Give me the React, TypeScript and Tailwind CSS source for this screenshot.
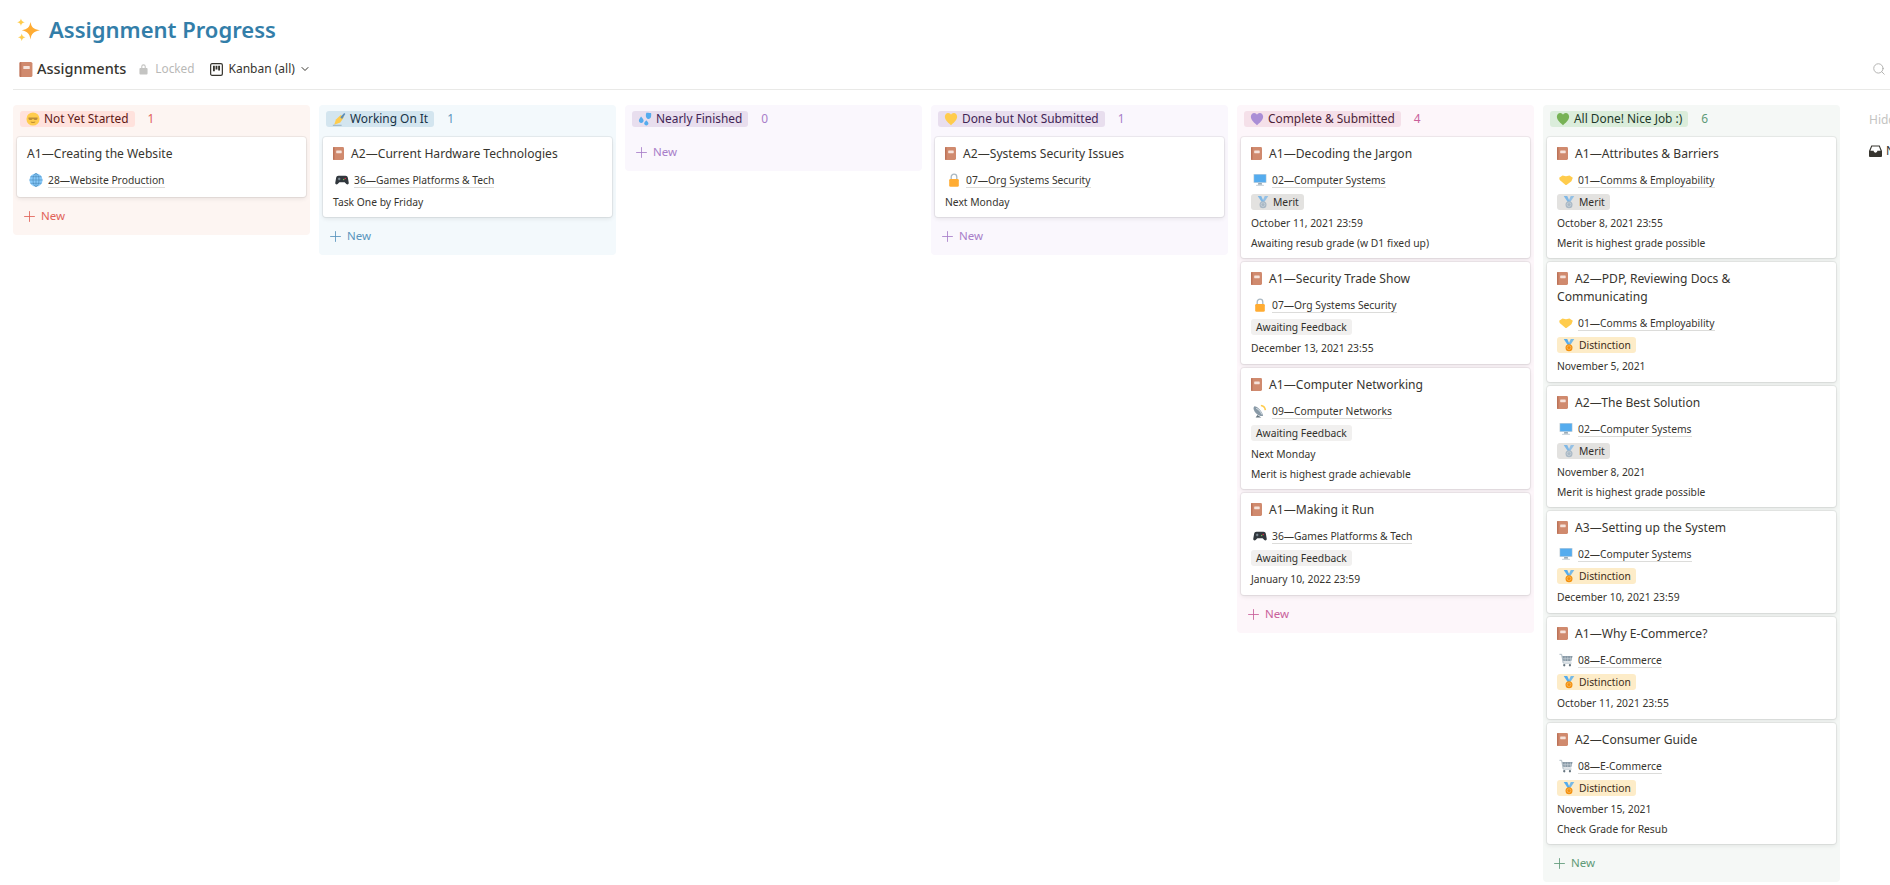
import { ChevronDown, Plus, Search } from 'lucide-react';

type EmojiName =
  | 'sparkles' | 'book' | 'face' | 'writing' | 'drops' | 'yellowHeart' | 'purpleHeart' | 'greenHeart'
  | 'globe' | 'gamepad' | 'lock' | 'computer' | 'handshake' | 'satellite' | 'cart' | 'silver' | 'gold';

function Heart({ color }: { color: string }) {
  return <path d="M8 15C3 11 1 8.200 1 5.200 1 2.800 2.800 1 4.800 1 6.200 1 7.400 1.800 8 3c.6-1.200 1.800-2 3.200-2C13.200 1 15 2.800 15 5.200 15 8.200 13 11 8 15z" fill={color} />;
}

function Medal({ ribbon, disc }: { ribbon: string; disc: string }) {
  return (
    <>
      <path d="M2 1h4l3 7H6.500z" fill={ribbon} />
      <path d="M14 1h-4L7 8h2.500z" fill={ribbon} opacity={0.8} />
      <circle cx="8" cy="11" r="4" fill={disc} />
      <circle cx="8" cy="11" r="2.200" fill={disc} stroke="#fff" strokeOpacity={0.45} strokeWidth={0.7} />
    </>
  );
}

function Emoji({ name, className }: { name: EmojiName; className: string }) {
  // the book and the sparkles are cropped to their own bounds so they can be sized exactly
  const box = name === 'book' ? '2 1 12 14' : name === 'sparkles' ? '1 0.5 14.500 14.500' : '0 0 16 16';
  return (
    <svg viewBox={box} className={`shrink-0 ${className}`}>
      {name === 'sparkles' && (
        <g fill="#FFAC33">
          <path d="M9.500 3c.7 3.400 1.700 4.400 6 5.300-4.300 1-5.300 2-6 5.700-.7-3.700-1.700-4.700-5.500-5.700 3.800-.9 4.800-1.900 5.500-5.300z" />
          <path d="M3.500 .8c.3 1.500.8 2 2.400 2.400-1.600.3-2.100.8-2.400 2.400-.3-1.600-.8-2.100-2.400-2.400 1.600-.4 2.100-.9 2.400-2.400z" fill="#FFCC4D" />
          <path d="M4 10.300c.3 1.600.8 2.100 2.400 2.400-1.600.4-2.100.9-2.400 2.400-.3-1.500-.8-2-2.400-2.400 1.600-.3 2.100-.8 2.400-2.400z" fill="#FFCC4D" />
        </g>
      )}
      {name === 'book' && (
        <>
          <rect x="2" y="1" width="12" height="14" rx="1.500" fill="#D08A6E" />
          <rect x="2" y="1" width="1.600" height="14" rx="0.800" fill="#BC7358" />
          <rect x="5.500" y="4.800" width="6" height="2.800" rx="0.400" fill="#F6E3DB" />
        </>
      )}
      {name === 'face' && (
        <>
          <circle cx="8" cy="8" r="7.500" fill="#FFCC4D" />
          <path d="M2.800 6.200h10.400v1.200c0 1.200-1.300 1.800-2.400 1.800-1.100 0-2-.7-2.800-1.500-.8.800-1.700 1.500-2.800 1.500-1.100 0-2.400-.6-2.400-1.800z" fill="#B98B3A" />
          <path d="M5.500 11.400c1.500.7 3.500.7 5 0" stroke="#A97B2C" strokeWidth="1" fill="none" />
        </>
      )}
      {name === 'writing' && (
        <>
          <path d="M2.500 14.500l2-6 5.500-5 3.500 2.500-4 6z" fill="#FFCC4D" />
          <path d="M9.500 6l4.500-5 1.200 1.200L11.500 8z" fill="#5B8DB8" />
          <path d="M1 15.200h10" stroke="#8FA9BD" strokeWidth="1" />
        </>
      )}
      {name === 'drops' && (
        <g fill="#55ACEE">
          <path d="M9.500 .8c2.800 0 5.500 .5 5.500 .5s.4 3-.4 5.100c-.7 1.700-2.800 2.100-4.200 1-1.500-1.100-1.900-3.400-.9-6.600z" />
          <path d="M3.500 5c1.600 1.900 2.900 3.400 2.900 4.800 0 1.500-1.200 2.700-2.700 2.700S1 11.300 1 9.800c0-1.500 1.100-3 2.500-4.800z" />
          <path d="M9.500 9.500c1.400 1.600 2.400 2.800 2.400 3.700 0 1.200-1.100 2.100-2.400 2.100s-2.400-.9-2.400-2.100c0-.9 1-2.200 2.400-3.700z" />
        </g>
      )}
      {name === 'yellowHeart' && <Heart color="#FFCC4D" />}
      {name === 'purpleHeart' && <Heart color="#AA8ED6" />}
      {name === 'greenHeart' && <Heart color="#77B255" />}
      {name === 'globe' && (
        <>
          <circle cx="8" cy="8" r="7.500" fill="#88C9F9" />
          <g stroke="#4F8FC0" strokeWidth="0.8" fill="none">
            <ellipse cx="8" cy="8" rx="3.400" ry="7.500" />
            <path d="M8 .5v15M.5 8h15M1.800 4.200h12.400M1.800 11.800h12.400" />
          </g>
        </>
      )}
      {name === 'gamepad' && (
        <>
          <path d="M4 3h8c1.600 0 2.400 1 2.700 2.500l1 5.500c.2 1.600-1.500 2.700-2.700 1.500L11 10.500H5l-2 2C1.800 13.700.100 12.600.300 11l1-5.500C1.600 4 2.400 3 4 3z" fill="#31373D" />
          <circle cx="11.700" cy="6.200" r="0.900" fill="#DD2E44" />
          <circle cx="9.900" cy="7.400" r="0.900" fill="#77B255" />
          <path d="M3.300 6.800h2.900M4.750 5.300v3" stroke="#99AAB5" strokeWidth="0.9" />
        </>
      )}
      {name === 'lock' && (
        <>
          <path d="M4.800 8V4.500a3.200 3.200 0 0 1 6.400 0V8" stroke="#AAB8C2" strokeWidth="1.500" fill="none" />
          <rect x="2.500" y="6.800" width="11" height="9" rx="1.500" fill="#FFAC33" />
        </>
      )}
      {name === 'computer' && (
        <>
          <rect x="0.500" y="1" width="15" height="10.500" rx="0.800" fill="#CCD6DD" />
          <rect x="1.300" y="1.800" width="13.400" height="8.800" fill="#55ACEE" />
          <path d="M6 11.500h4l.5 2h-5z" fill="#99AAB5" />
          <rect x="3.500" y="13.500" width="9" height="1.300" fill="#CCD6DD" />
        </>
      )}
      {name === 'handshake' && (
        <path d="M.2 5.500 4 2.800l4 1 4-1 3.800 2.700L14.200 9.300l-5.700 4.500H7.500L2.800 9.600 .8 8z" fill="#FFCC4D" />
      )}
      {name === 'satellite' && (
        <>
          <path d="M1.500 2.500c3.500 0 9 5.500 10 11-4 1.200-10.500-3.300-11-9z" fill="#8899A6" />
          <path d="M3.500 4.800c2.200.5 5.500 3.800 6.500 7" stroke="#CCD6DD" strokeWidth="1.200" fill="none" />
          <path d="M9 .8c3.500.3 5.700 2.500 6 6l-1.800.2c-.3-2.300-1.800-4-4.200-4.300z" fill="#FFCC4D" />
          <path d="M5 12.500 3 15.500h6.500z" fill="#66757F" />
        </>
      )}
      {name === 'cart' && (
        <>
          <path d="M.5 1.500h2.500l1.800 10h9.500" stroke="#AAB8C2" strokeWidth="1.100" fill="none" />
          <path d="M3.800 3.500h11.700l-1.500 6H5z" fill="#8899A6" />
          <path d="M7 4v5.500M10 4v5.500M13 4v5.500M4.600 6.500h10.300" stroke="#CCD6DD" strokeWidth="0.7" />
          <circle cx="6" cy="14" r="1.300" fill="#66757F" />
          <circle cx="12.500" cy="14" r="1.300" fill="#66757F" />
        </>
      )}
      {name === 'silver' && <Medal ribbon="#7FB8E6" disc="#A9B8C4" />}
      {name === 'gold' && <Medal ribbon="#55ACEE" disc="#F4900C" />}
    </svg>
  );
}

type Tag = 'merit' | 'distinction' | 'awaiting';

interface CardData {
  title: string;
  noIcon?: boolean;
  unit: string;
  unitIcon: EmojiName;
  tag?: Tag;
  date?: string;
  note?: string;
}

const unit = {
  comms: { unit: '01—Comms & Employability', unitIcon: 'handshake' as EmojiName },
  comp: { unit: '02—Computer Systems', unitIcon: 'computer' as EmojiName },
  sec: { unit: '07—Org Systems Security', unitIcon: 'lock' as EmojiName },
  ecom: { unit: '08—E-Commerce', unitIcon: 'cart' as EmojiName },
  net: { unit: '09—Computer Networks', unitIcon: 'satellite' as EmojiName },
  games: { unit: '36—Games Platforms & Tech', unitIcon: 'gamepad' as EmojiName },
};

const columns = [
  {
    name: 'Not Yet Started', icon: 'face' as EmojiName, count: 1,
    bg: 'bg-[#fdf5f2]', badge: 'bg-[#ffe2dd] text-[#5d1715]', countText: 'text-[#e16259]', newText: 'text-[#e16259]',
    cards: [
      { title: 'A1—Creating the Website', noIcon: true, unit: '28—Website Production', unitIcon: 'globe' as EmojiName },
    ] as CardData[],
  },
  {
    name: 'Working On It', icon: 'writing' as EmojiName, count: 1,
    bg: 'bg-[#f3f9fc]', badge: 'bg-[#d3e5ef] text-[#183347]', countText: 'text-[#5a95bd]', newText: 'text-[#5a95bd]',
    cards: [{ title: 'A2—Current Hardware Technologies', ...unit.games, note: 'Task One by Friday' }] as CardData[],
  },
  {
    name: 'Nearly Finished', icon: 'drops' as EmojiName, count: 0,
    bg: 'bg-[#faf7fd]', badge: 'bg-[#e8deee] text-[#412454]', countText: 'text-[#a87ec9]', newText: 'text-[#a87ec9]',
    cards: [] as CardData[],
  },
  {
    name: 'Done but Not Submitted', icon: 'yellowHeart' as EmojiName, count: 1,
    bg: 'bg-[#faf7fd]', badge: 'bg-[#e8deee] text-[#412454]', countText: 'text-[#a87ec9]', newText: 'text-[#a87ec9]',
    cards: [{ title: 'A2—Systems Security Issues', ...unit.sec, note: 'Next Monday' }] as CardData[],
  },
  {
    name: 'Complete & Submitted', icon: 'purpleHeart' as EmojiName, count: 4,
    bg: 'bg-[#fdf6fa]', badge: 'bg-[#f5e0e9] text-[#4c2337]', countText: 'text-[#c9609a]', newText: 'text-[#c9609a]',
    cards: [
      { title: 'A1—Decoding the Jargon', ...unit.comp, tag: 'merit', date: 'October 11, 2021 23:59', note: 'Awaiting resub grade (w D1 fixed up)' },
      { title: 'A1—Security Trade Show', ...unit.sec, tag: 'awaiting', date: 'December 13, 2021 23:55' },
      { title: 'A1—Computer Networking', ...unit.net, tag: 'awaiting', date: 'Next Monday', note: 'Merit is highest grade achievable' },
      { title: 'A1—Making it Run', ...unit.games, tag: 'awaiting', date: 'January 10, 2022 23:59' },
    ] as CardData[],
  },
  {
    name: 'All Done! Nice Job :)', icon: 'greenHeart' as EmojiName, count: 6,
    bg: 'bg-[#f5f8f6]', badge: 'bg-[#dbeddb] text-[#1c3829]', countText: 'text-[#5f9a78]', newText: 'text-[#5f9a78]',
    cards: [
      { title: 'A1—Attributes & Barriers', ...unit.comms, tag: 'merit', date: 'October 8, 2021 23:55', note: 'Merit is highest grade possible' },
      { title: 'A2—PDP, Reviewing Docs &\nCommunicating', ...unit.comms, tag: 'distinction', date: 'November 5, 2021' },
      { title: 'A2—The Best Solution', ...unit.comp, tag: 'merit', date: 'November 8, 2021', note: 'Merit is highest grade possible' },
      { title: 'A3—Setting up the System', ...unit.comp, tag: 'distinction', date: 'December 10, 2021 23:59' },
      { title: 'A1—Why E-Commerce?', ...unit.ecom, tag: 'distinction', date: 'October 11, 2021 23:55' },
      { title: 'A2—Consumer Guide', ...unit.ecom, tag: 'distinction', date: 'November 15, 2021', note: 'Check Grade for Resub' },
    ] as CardData[],
  },
];

function TagPill({ tag }: { tag: Tag }) {
  if (tag === 'awaiting') {
    return <span className="inline-flex h-4 items-center rounded-[3px] bg-[#f1f0ef] px-[5px] text-[#32302c]">Awaiting Feedback</span>;
  }
  const merit = tag === 'merit';
  return (
    <span className={`inline-flex h-4 items-center gap-[3px] rounded-[3px] px-[5px] ${merit ? 'bg-[#e3e2e0] text-[#32302c]' : 'bg-[#fdecc8] text-[#402c1b]'}`}>
      <Emoji name={merit ? 'silver' : 'gold'} className="h-[14px] w-[14px]" />
      {merit ? 'Merit' : 'Distinction'}
    </span>
  );
}

function Card({ card }: { card: CardData }) {
  return (
    <div className="mb-1 rounded-[3px] bg-white px-[10px] pt-[8px] pb-[5px] text-[10.3px] leading-[20px] text-[#37352f] shadow-[0_0_0_1px_rgba(15,15,15,0.06),0_2px_4px_rgba(15,15,15,0.08)]">
      <div className="mb-[7px] whitespace-pre-line text-[12.1px] leading-[18px]">
        {!card.noIcon && <Emoji name="book" className="mr-[7px] inline-block h-[13px] w-[11px] -translate-y-[1px] align-middle" />}
        {card.title}
      </div>
      <div className="flex h-5 items-center">
        <Emoji name={card.unitIcon} className="ml-[2px] mr-[5px] h-[14px] w-[14px]" />
        <span className="border-b border-[#dcdcda] leading-[14px]">{card.unit}</span>
      </div>
      {card.tag && (
        <div className="mt-1 mb-[3px] flex h-4 items-center">
          <TagPill tag={card.tag} />
        </div>
      )}
      {card.date && <div>{card.date}</div>}
      {card.note && <div className={card.tag ? '' : 'mt-[2px]'}>{card.note}</div>}
      {!card.note && <div className={card.date ? 'h-px' : 'h-[2px]'} />}
    </div>
  );
}

export default function App() {
  return (
    <div className="h-screen w-screen overflow-hidden bg-white text-[#37352f] [font-family:'Noto_Sans',sans-serif]">
      <div className="flex h-[50px] items-center pl-[17px] pt-[8px] text-[#337ea9]">
        <Emoji name="sparkles" className="mr-[9px] h-[23px] w-[23px]" />
        <h1 className="text-[22px] font-semibold leading-[30px]">Assignment Progress</h1>
      </div>

      <div className="ml-[13px] flex h-[40px] items-center border-b border-[#e9e9e7] pb-[1px] pl-[6px] pr-[4px]">
        <Emoji name="book" className="mr-[4px] h-[15px] w-[14px]" />
        <span className="text-[14.5px] font-medium">Assignments</span>
        <svg viewBox="0 0 10 12" className="ml-[13px] h-[12px] w-[9px] fill-[#c4c4c2]">
          <path d="M2.500 5V3.300a2.500 2.500 0 0 1 5 0V5h1A1 1 0 0 1 9.500 6v5a1 1 0 0 1-1 1h-7a1 1 0 0 1-1-1V6a1 1 0 0 1 1-1zm1.200 0h2.600V3.300a1.300 1.300 0 0 0-2.600 0z" />
        </svg>
        <span className="ml-[7px] text-[11.800px] text-[#b9b9b7]">Locked</span>
        <svg viewBox="0 0 14 14" className="ml-[15px] h-[13px] w-[13px]">
          <rect x="0.700" y="0.700" width="12.600" height="12.600" rx="1.500" fill="none" stroke="#37352f" strokeWidth="1.300" />
          <path d="M3.200 3h2v6h-2zM6 3h2v4H6zM8.800 3h2v5.200h-2z" fill="#37352f" />
        </svg>
        <span className="ml-[6px] text-[12px]">Kanban (all)</span>
        <ChevronDown size={12} strokeWidth={2} className="ml-[4px]" />
        <Search size={14} strokeWidth={1.5} className="ml-auto text-[#aaaaa8]" />
      </div>

      <div className="ml-[13px] mt-[15px] flex items-start gap-[9px]">
        {columns.map((col) => (
          <div key={col.name} className={`w-[297px] shrink-0 rounded-[4px] px-1 pt-[6px] pb-1 ${col.bg}`}>
            <div className="mb-[10px] flex h-4 items-center pl-[3px] text-[11.900px]">
              <span className={`flex h-4 items-center gap-[4px] rounded-[3px] px-[6px] ${col.badge}`}>
                <Emoji name={col.icon} className="h-[14px] w-[14px]" />
                {col.name}
              </span>
              <span className={`ml-[13px] ${col.countText}`}>{col.count}</span>
            </div>
            {col.cards.map((card) => (
              <Card key={card.title} card={card} />
            ))}
            <div className={`flex h-[30px] items-center gap-[3px] pl-[4px] text-[11.500px] ${col.newText}`}>
              <Plus size={17} strokeWidth={1.2} />
              New
            </div>
          </div>
        ))}
        <div className="ml-[20px] w-[200px] shrink-0 pt-[7px] text-[12px] text-[#c4c4c2]">
          <div className="flex h-4 items-center">Hidden columns</div>
          <div className="mt-[14px] flex items-center gap-[4px] text-[#37352f]">
            <svg viewBox="0 0 14 14" className="h-[14px] w-[13px] fill-[#37352f]">
              <path d="M2.500 1h9L14 7v5.500a1 1 0 0 1-1 1H1a1 1 0 0 1-1-1V7zm.8 1.200L1.500 6.800H5c0 1.100.9 2 2 2s2-.9 2-2h3.500l-1.800-4.600z" />
            </svg>
            No Status
          </div>
        </div>
      </div>
    </div>
  );
}
